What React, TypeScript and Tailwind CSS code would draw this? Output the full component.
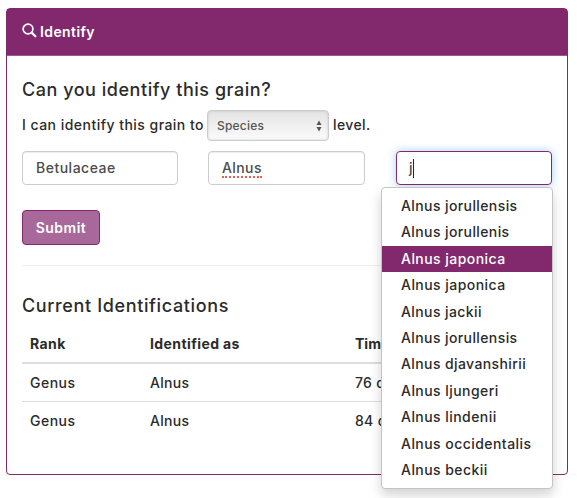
const species = [
  { name: 'Alnus jorullensis', tracking: 'tracking-[0.4px]' },
  { name: 'Alnus jorullenis', tracking: 'tracking-[0.4px]' },
  { name: 'Alnus japonica', tracking: 'tracking-[0.45px]', active: true },
  { name: 'Alnus japonica', tracking: 'tracking-[0.45px]' },
  { name: 'Alnus jackii', tracking: 'tracking-[0.4px]' },
  { name: 'Alnus jorullensis', tracking: 'tracking-[0.4px]' },
  { name: 'Alnus djavanshirii', tracking: 'tracking-[0.4px]' },
  { name: 'Alnus ljungeri', tracking: 'tracking-[0.45px]' },
  { name: 'Alnus lindenii', tracking: 'tracking-[0.45px]' },
  { name: 'Alnus occidentalis', tracking: 'tracking-[0.45px]' },
  { name: 'Alnus beckii', tracking: 'tracking-[0.45px]' },
];

const identifications = [
  { rank: 'Genus', taxon: 'Alnus', time: '76 days' },
  { rank: 'Genus', taxon: 'Alnus', time: '84 days' },
];

function SearchIcon() {
  return (
    <svg className="relative -top-px mr-[3px] h-[15px] w-[15px] shrink-0" viewBox="0 0 15 15" fill="none" stroke="currentColor">
      <circle cx="6" cy="6" r="4.9" strokeWidth="1.7" />
      <path d="M9.6 9.6 13.4 13.3" strokeWidth="2.2" strokeLinecap="round" />
    </svg>
  );
}

function SpeciesMenu() {
  return (
    <ul className="absolute -left-[16px] top-[35px] z-10 w-[172px] rounded-[4px] border border-[#c4c4c4] bg-white py-[5px] shadow-[0_6px_12px_rgba(0,0,0,0.175)]">
      {species.map((item, i) => (
        <li
          key={i}
          className={`h-[26.4px] whitespace-nowrap pl-[19px] leading-[26.4px] ${item.tracking} ${
            item.active ? 'bg-[#82296e] text-white' : 'text-[#2b2b2b]'
          }`}
        >
          {item.name}
        </li>
      ))}
    </ul>
  );
}

export default function App() {
  return (
    <div className="h-[498px] w-[577px] overflow-hidden bg-white pl-[6px] pt-[8px] font-['Inter','Liberation_Sans',sans-serif] text-[14px] font-medium leading-[20px] text-[#2b2b2b]">
      <section className="h-[467px] w-[562px] rounded-[4px] border border-[#82296e] bg-white">
        <header className="flex h-[47px] items-center border-b border-[#a0568e] bg-[#82296e] pb-px pl-[15px] text-white">
          <SearchIcon />
          <span className="font-semibold tracking-[0.4px]">Identify</span>
        </header>
        <div className="px-[15px] pt-[24px]">
          <h2 className="text-[18px] leading-[20px] tracking-[0.53px]">Can you identify this grain?</h2>
          <div className="mt-[10px] flex h-[31px] items-center">
            <span className="relative -top-px w-[185px] shrink-0 whitespace-nowrap tracking-[0.47px]">I can identify this grain to</span>
            <div className="flex h-[31px] w-[122px] shrink-0 items-center justify-between rounded-[4px] border border-[#ccc] bg-linear-to-b from-[#e4e4e4] to-[#fbfbfb] pl-[9px] pr-[6px] text-[12px] text-[#555] shadow-[inset_0_0_3px_rgba(0,0,0,0.15)]">
              <span className="tracking-[0.2px]">Species</span>
              <svg className="h-[12px] w-[6px]" viewBox="0 0 6 12" fill="#555">
                <path d="M3 0.5 5.5 5h-5zM3 11.5.5 7h5z" />
              </svg>
            </div>
            <span className="relative -top-px ml-[4px] tracking-[0.4px]">level.</span>
          </div>
          <div className="mt-[10px] flex text-[#4c4c4c]">
            <div className="flex h-[34px] w-[156px] items-center rounded-[4px] border border-[#ccc] pl-[13px] shadow-[inset_0_1px_1px_rgba(0,0,0,0.075)]">
              <span className="tracking-[0.5px]">Betulaceae</span>
            </div>
            <div className="ml-[30px] flex h-[34px] w-[157px] items-center rounded-[4px] border border-[#ccc] pl-[13px] shadow-[inset_0_1px_1px_rgba(0,0,0,0.075)]">
              <span className="relative tracking-[0.4px]">
                Alnus
                <span className="absolute bottom-0 left-0 w-full border-b-2 border-dotted border-[#f05a50]" />
              </span>
            </div>
            <div className="relative ml-[31px] flex h-[34px] w-[156px] items-center rounded-[4px] border border-[#82296e] pl-[12px] shadow-[0_0_8px_rgba(102,175,233,0.6)]">
              <span>j</span>
              <span className="h-[19px] w-px bg-[#222]" />
              <SpeciesMenu />
            </div>
          </div>
          <button className="mt-[25px] block h-[35px] w-[78px] rounded-[4px] border border-[#82296e] bg-[#a8699a] font-semibold tracking-[0.5px] text-white">
            Submit
          </button>
          <hr className="mt-[20px] border-[#eee]" />
          <h3 className="mt-[30px] text-[18px] leading-[20px] tracking-[0.63px]">Current Identifications</h3>
          <table className="mt-[9px] w-full table-fixed border-collapse text-left">
            <thead>
              <tr className="h-[38px] border-b-2 border-[#ddd]">
                <th className="w-[120px] pl-[8px] font-bold tracking-[0.4px]">Rank</th>
                <th className="w-[205px] pl-[8px] font-bold tracking-[0.4px]">Identified as</th>
                <th className="pl-[8px] font-bold">Time</th>
              </tr>
            </thead>
            <tbody>
              {identifications.map((row) => (
                <tr key={row.time} className="h-[38px] border-b border-[#ddd] last:border-b-0">
                  <td className="pl-[8px] pt-px tracking-[0.5px]">{row.rank}</td>
                  <td className="pl-[8px] pt-px tracking-[0.3px]">{row.taxon}</td>
                  <td className="pl-[8px] pt-px tracking-[0.3px]">{row.time}</td>
                </tr>
              ))}
            </tbody>
          </table>
        </div>
      </section>
    </div>
  );
}
